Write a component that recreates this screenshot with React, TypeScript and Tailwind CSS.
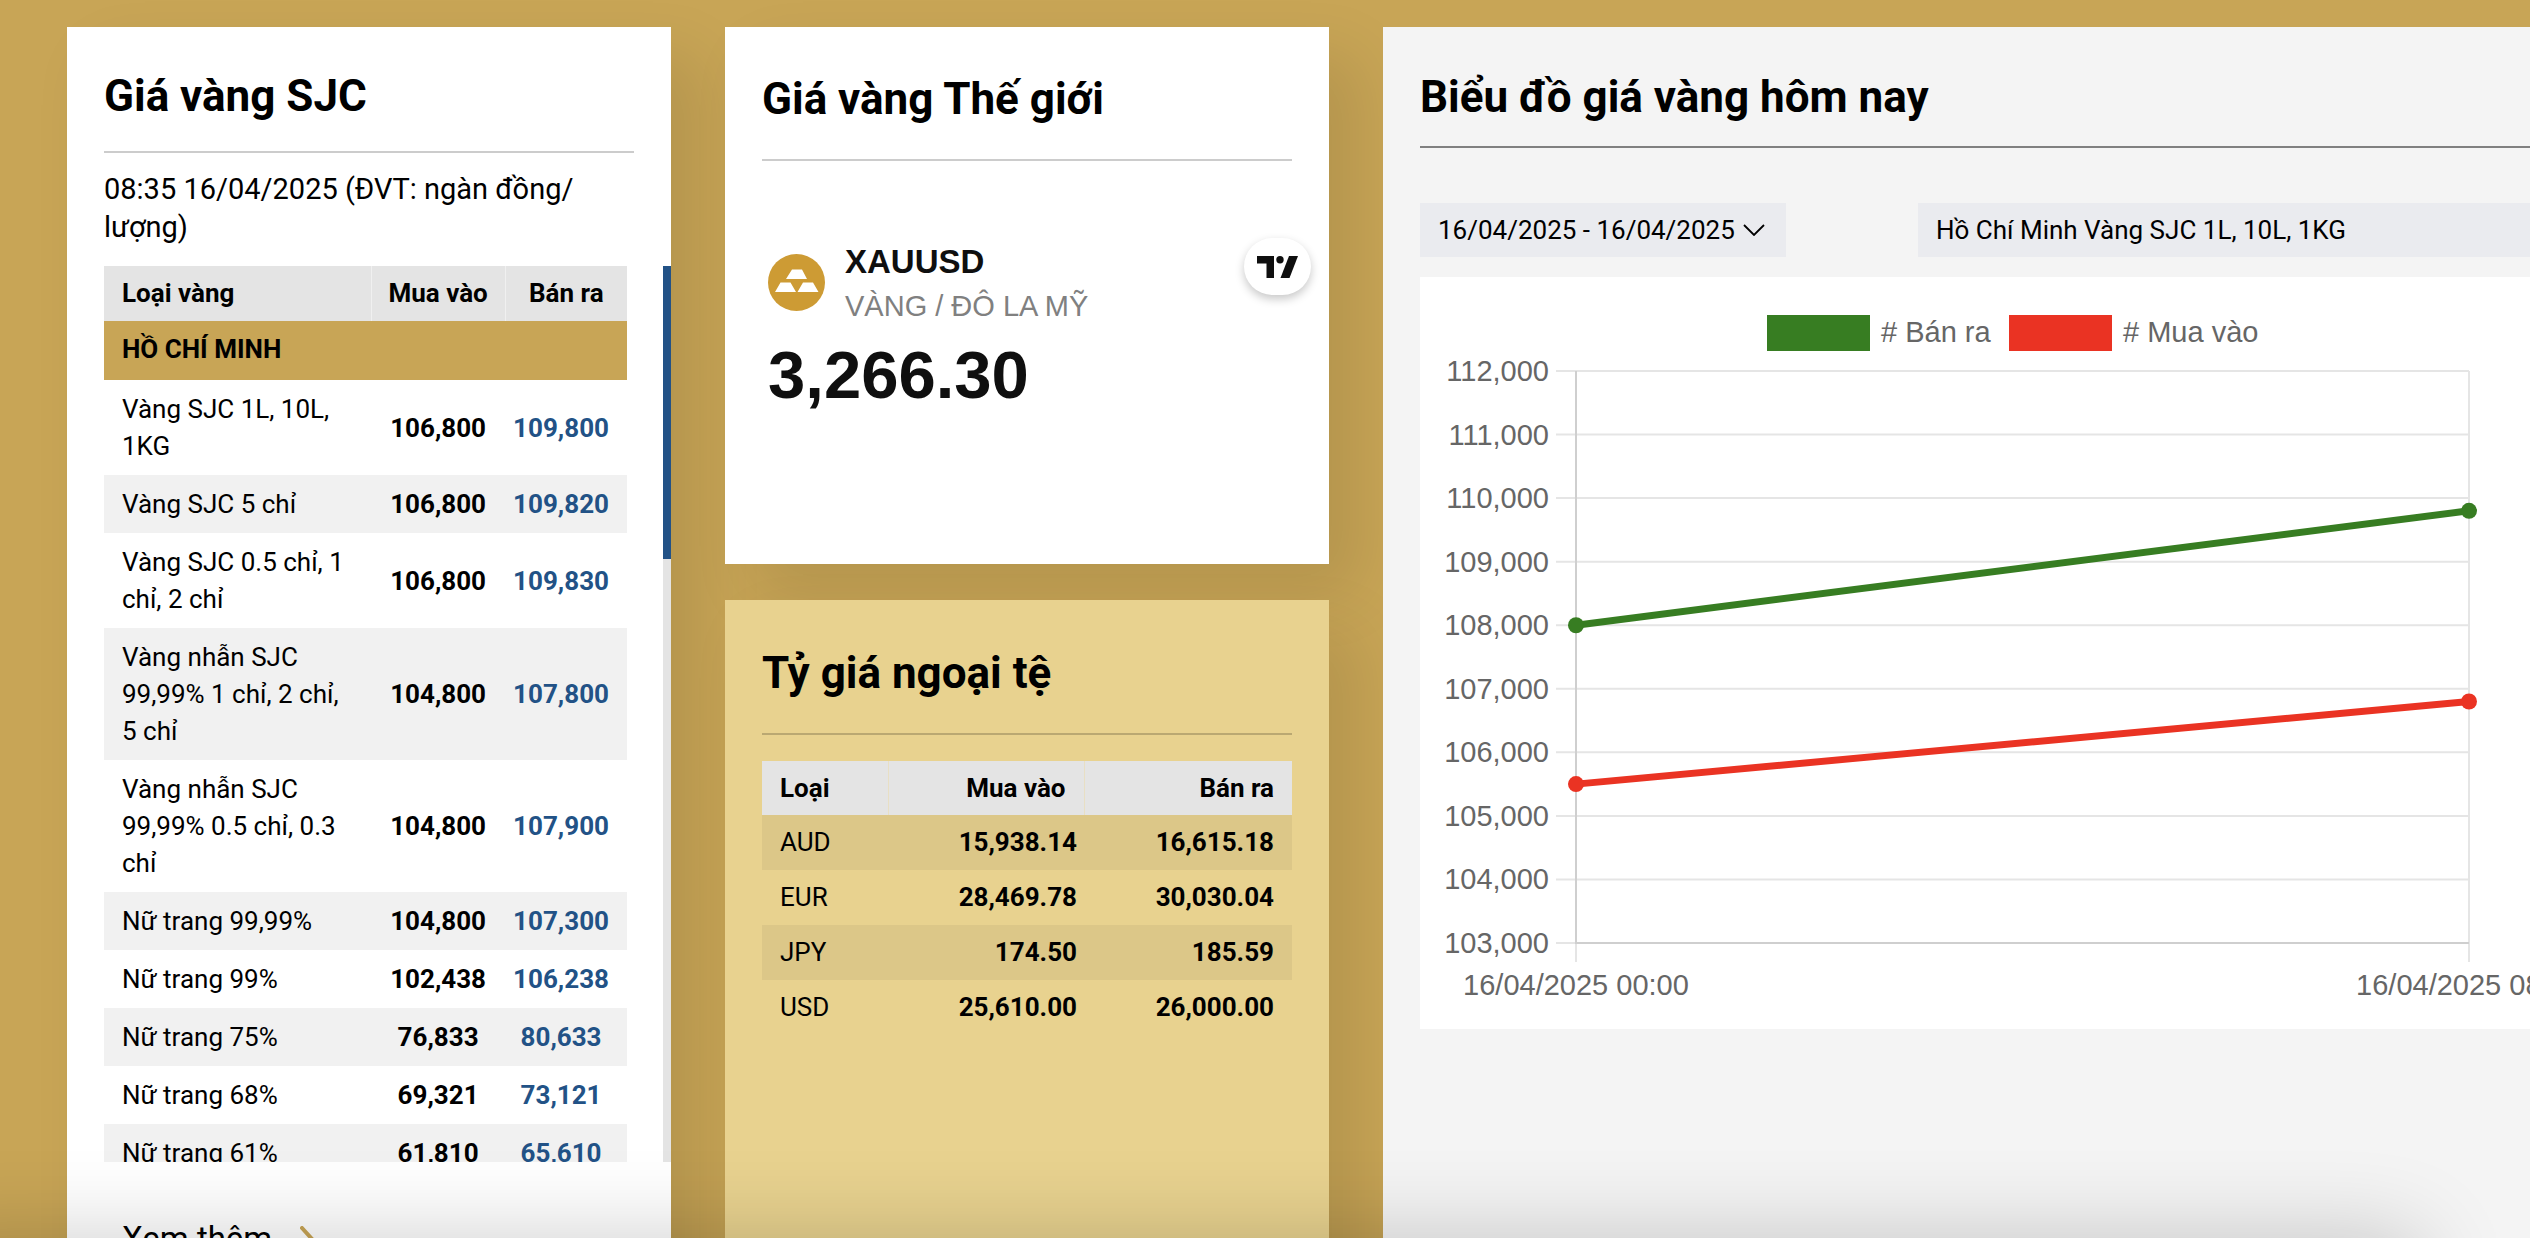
import React, { useState } from 'react';
import clsx from 'clsx';

type GoldPrice = { name: string; buy: string; sell: string };
type Rate = { code: string; buy: string; sell: string };

const GOLD_PRICES: GoldPrice[] = [
  { name: 'Vàng SJC 1L, 10L, 1KG', buy: '106,800', sell: '109,800' },
  { name: 'Vàng SJC 5 chỉ', buy: '106,800', sell: '109,820' },
  { name: 'Vàng SJC 0.5 chỉ, 1 chỉ, 2 chỉ', buy: '106,800', sell: '109,830' },
  { name: 'Vàng nhẫn SJC 99,99% 1 chỉ, 2 chỉ, 5 chỉ', buy: '104,800', sell: '107,800' },
  { name: 'Vàng nhẫn SJC 99,99% 0.5 chỉ, 0.3 chỉ', buy: '104,800', sell: '107,900' },
  { name: 'Nữ trang 99,99%', buy: '104,800', sell: '107,300' },
  { name: 'Nữ trang 99%', buy: '102,438', sell: '106,238' },
  { name: 'Nữ trang 75%', buy: '76,833', sell: '80,633' },
  { name: 'Nữ trang 68%', buy: '69,321', sell: '73,121' },
  { name: 'Nữ trang 61%', buy: '61,810', sell: '65,610' },
];

const RATES: Rate[] = [
  { code: 'AUD', buy: '15,938.14', sell: '16,615.18' },
  { code: 'EUR', buy: '28,469.78', sell: '30,030.04' },
  { code: 'JPY', buy: '174.50', sell: '185.59' },
  { code: 'USD', buy: '25,610.00', sell: '26,000.00' },
];

const SERIES = [
  { label: '# Bán ra', color: '#377d22', values: [108000, 109800], boxX: 347, textX: 461 },
  { label: '# Mua vào', color: '#ea3323', values: [105500, 106800], boxX: 589, textX: 703 },
];

const TIMES = ['16/04/2025 00:00', '16/04/2025 08:35'];

// plot area of the chart, in viewBox units
const PLOT = { left: 156, right: 1049, top: 94, bottom: 666 };
const MIN_PRICE = 103000;
const MAX_PRICE = 112000;

const priceToY = (price: number) =>
  PLOT.bottom - ((price - MIN_PRICE) / (MAX_PRICE - MIN_PRICE)) * (PLOT.bottom - PLOT.top);

function SjcCard() {
  return (
    <section className="relative bg-white pt-[43px] shadow-[30px_30px_60px_rgba(0,0,0,0.1)]">
      <div className="px-[37px]">
        <h2 className="border-b-2 border-[#cccccc] pb-[29px] text-[44px] leading-[52px] font-bold">Giá vàng SJC</h2>
        <p className="mt-[17px] text-[29px] leading-[38px]">08:35 16/04/2025 (ĐVT: ngàn đồng/<wbr />lượng)</p>
      </div>

      <div className="mt-5 flex h-[896px] justify-between overflow-hidden pl-[37px]">
        <table className="mr-9 h-fit flex-1 table-fixed border-collapse text-[26px] leading-[37px]">
          <colgroup>
            <col />
            <col className="w-[134px]" />
            <col className="w-[120px]" />
          </colgroup>
          <thead>
            <tr className="bg-[#e4e4e4]">
              <th className="py-[9px] pl-[18px] text-left font-bold">Loại vàng</th>
              <th className="border-l border-[#f0f0f0] py-[9px] font-bold">Mua vào</th>
              <th className="border-l border-[#f0f0f0] py-[9px] font-bold">Bán ra</th>
            </tr>
          </thead>
          <tbody>
            <tr className="bg-[#c8a556]">
              <th colSpan={3} className="pt-[10px] pb-3 pl-[18px] text-left font-bold">HỒ CHÍ MINH</th>
            </tr>
            {GOLD_PRICES.map((row, index) => (
              <tr key={row.name} className={clsx(index % 2 === 1 && 'bg-[#f1f1f1]')}>
                <td className="pt-[11px] pr-6 pb-[10px] pl-[18px]">{row.name}</td>
                <td className="pt-[11px] pb-[10px] text-center font-bold">{row.buy}</td>
                <td className="pt-[11px] pr-[18px] pb-[10px] pl-2 text-center font-bold text-[#225286]">{row.sell}</td>
              </tr>
            ))}
          </tbody>
        </table>
        {/* Scroll track */}
        <div className="w-2 shrink-0 bg-[#e4e4e4]">
          <div className="h-[293px] bg-[#225286]" />
        </div>
      </div>

      <a href="#" className="mt-[53px] flex items-center gap-7 pb-10 pl-[55px] text-[33px] leading-[48px]">
        Xem thêm
        <svg width="14" height="26" viewBox="0 0 14 26" fill="none" stroke="#c8a556" strokeWidth="4" strokeLinecap="round">
          <path d="M2 2l10 11L2 24" />
        </svg>
      </a>
    </section>
  );
}

function WorldCard() {
  return (
    <section className="relative min-h-[537px] bg-white px-[37px] pt-[46px] shadow-[30px_30px_60px_rgba(0,0,0,0.1)]">
      <h2 className="border-b-2 border-[#cccccc] pb-[34px] text-[44px] leading-[52px] font-bold">Giá vàng Thế giới</h2>

      <div className="mt-[78px] flex items-center gap-5 pl-1.5 font-['Liberation_Sans',Arial,sans-serif]">
        <svg width="57" height="57" viewBox="0 0 57 57" className="mb-1">
          <circle cx="28.5" cy="28.5" r="28.5" fill="#cd9b34" />
          <path d="M24 15.500h10l5 9.500H18zM12.500 28.500h10l5.500 9.500H7zM35 28.500h10l5.500 9.500h-21z" fill="#fff" />
        </svg>
        <div className="text-[#0f0f0f]">
          <div className="text-[33px] leading-[45px] font-bold">XAUUSD</div>
          <div className="text-[29px] leading-[45px] text-[#808080]">VÀNG / ĐÔ LA MỸ</div>
        </div>
      </div>
      <div className="mt-1.5 pl-1.5 font-['Liberation_Sans',Arial,sans-serif] text-[67px] leading-[80px] font-bold text-[#0f0f0f]">
        3,266.30
      </div>

      <a
        href="#"
        aria-label="TradingView"
        className="absolute top-[211px] right-[18px] flex h-[57px] w-[67px] items-center justify-center rounded-full bg-white shadow-[0_4px_10px_rgba(0,0,0,0.22)]"
      >
        <svg width="41" height="22" viewBox="0 0 41 22" fill="#0f0f0f">
          <path d="M0 0h17v22H9.500V7.500H0z" />
          <circle cx="23" cy="3.700" r="3.700" />
          <path d="M32 0h9l-8.500 22h-9z" />
        </svg>
      </a>
    </section>
  );
}

function RatesCard() {
  return (
    <section className="relative flex-1 bg-[#e8d28f] px-[37px] pt-[47px] shadow-[30px_30px_60px_rgba(0,0,0,0.1)]">
      <h2 className="border-b-2 border-[#baa872] pb-[34px] text-[44px] leading-[52px] font-bold">Tỷ giá ngoại tệ</h2>

      <table className="mt-[26px] w-full table-fixed border-collapse text-[26px] leading-9">
        <colgroup>
          <col className="w-[126px]" />
          <col className="w-[196px]" />
          <col />
        </colgroup>
        <thead>
          <tr className="bg-[#e4e4e4]">
            <th className="px-[18px] py-[9px] text-left font-bold">Loại</th>
            <th className="border-l border-[#e8dfc4] px-[18px] py-[9px] text-right font-bold">Mua vào</th>
            <th className="border-l border-[#e8dfc4] px-[18px] py-[9px] text-right font-bold">Bán ra</th>
          </tr>
        </thead>
        <tbody>
          {RATES.map((rate, index) => (
            <tr key={rate.code} className={clsx(index % 2 === 0 && 'bg-[#dcc788]')}>
              <td className="px-[18px] pt-[9px] pb-[10px]">{rate.code}</td>
              <td className="pt-[9px] pr-[7px] pb-[10px] text-right font-bold">{rate.buy}</td>
              <td className="pt-[9px] pr-[18px] pb-[10px] text-right font-bold">{rate.sell}</td>
            </tr>
          ))}
        </tbody>
      </table>
    </section>
  );
}

function PriceChart() {
  const prices: number[] = [];
  for (let price = MAX_PRICE; price >= MIN_PRICE; price -= 1000) prices.push(price);

  return (
    <svg
      viewBox="0 0 1134 752"
      className="mt-5 block h-auto w-full bg-white font-['Liberation_Sans',Arial,sans-serif]"
      fontSize="29"
      fill="#666666"
    >
      {/* Legend */}
      {SERIES.map((s) => (
        <g key={s.label}>
          <rect x={s.boxX} y="38" width="103" height="36" fill={s.color} />
          <text x={s.textX} y="65">{s.label}</text>
        </g>
      ))}

      {/* Grid */}
      {prices.map((price) => (
        <g key={price}>
          <line x1={PLOT.left - 20} x2={PLOT.right} y1={priceToY(price)} y2={priceToY(price)} stroke="#e5e5e5" strokeWidth="2" />
          <text x="129" y={priceToY(price) + 10} textAnchor="end">{price.toLocaleString('en-US')}</text>
        </g>
      ))}
      {[PLOT.left, PLOT.right].map((x, index) => (
        <g key={x}>
          <line x1={x} x2={x} y1={PLOT.top} y2={PLOT.bottom + 19} stroke="#e5e5e5" strokeWidth="2" />
          <text x={x} y="718" textAnchor="middle">{TIMES[index]}</text>
        </g>
      ))}
      <path d={`M${PLOT.left} ${PLOT.top}V${PLOT.bottom}H${PLOT.right}`} fill="none" stroke="#cfcfcf" strokeWidth="2" />

      {/* Lines */}
      {SERIES.map((s) => (
        <g key={s.label} fill={s.color}>
          <line
            x1={PLOT.left}
            y1={priceToY(s.values[0])}
            x2={PLOT.right}
            y2={priceToY(s.values[1])}
            stroke={s.color}
            strokeWidth="7"
          />
          <circle cx={PLOT.left} cy={priceToY(s.values[0])} r="8" />
          <circle cx={PLOT.right} cy={priceToY(s.values[1])} r="8" />
        </g>
      ))}
    </svg>
  );
}

function ChartCard() {
  const [product, setProduct] = useState('sjc-1l');

  return (
    <section className="relative bg-[#f4f4f4] px-[37px] pt-[44px]">
      <h2 className="border-b-2 border-[#808080] pb-[23px] text-[44px] leading-[52px] font-bold">Biểu đồ giá vàng hôm nay</h2>

      <div className="mt-[55px] flex gap-[132px] text-[26px] leading-[54px]">
        <button type="button" className="flex w-[366px] shrink-0 items-center gap-2 bg-[#eaebef] pl-[18px] text-left">
          16/04/2025 - 16/04/2025
          <svg width="22" height="12" viewBox="0 0 22 12" fill="none" stroke="#000" strokeWidth="1.800">
            <path d="M1 1l10 10L21 1" />
          </svg>
        </button>
        <select
          aria-label="Loại vàng"
          value={product}
          onChange={(e) => setProduct(e.target.value)}
          className="h-[54px] min-w-0 flex-1 appearance-none bg-[#eaebef] pl-[18px]"
        >
          <option value="sjc-1l">Hồ Chí Minh Vàng SJC 1L, 10L, 1KG</option>
        </select>
      </div>

      <PriceChart />
    </section>
  );
}

export default function App() {
  return (
    <div className="h-screen overflow-hidden bg-[#c8a556] pt-[27px] font-[Roboto,sans-serif] text-black">
      {/* The chart column runs past the right edge of the window */}
      <main className="-mr-[61px] ml-[67px] grid grid-cols-[1fr_1fr_2fr] gap-[54px]">
        <SjcCard />
        <div className="flex flex-col gap-9">
          <WorldCard />
          <RatesCard />
        </div>
        <ChartCard />
      </main>

      {/* Shadow cast by the bar docked under the fold */}
      <div
        aria-hidden="true"
        className="pointer-events-none fixed top-full right-[110px] -left-20 h-40 shadow-[0_0_90px_rgba(0,0,0,0.2)]"
      />
    </div>
  );
}
